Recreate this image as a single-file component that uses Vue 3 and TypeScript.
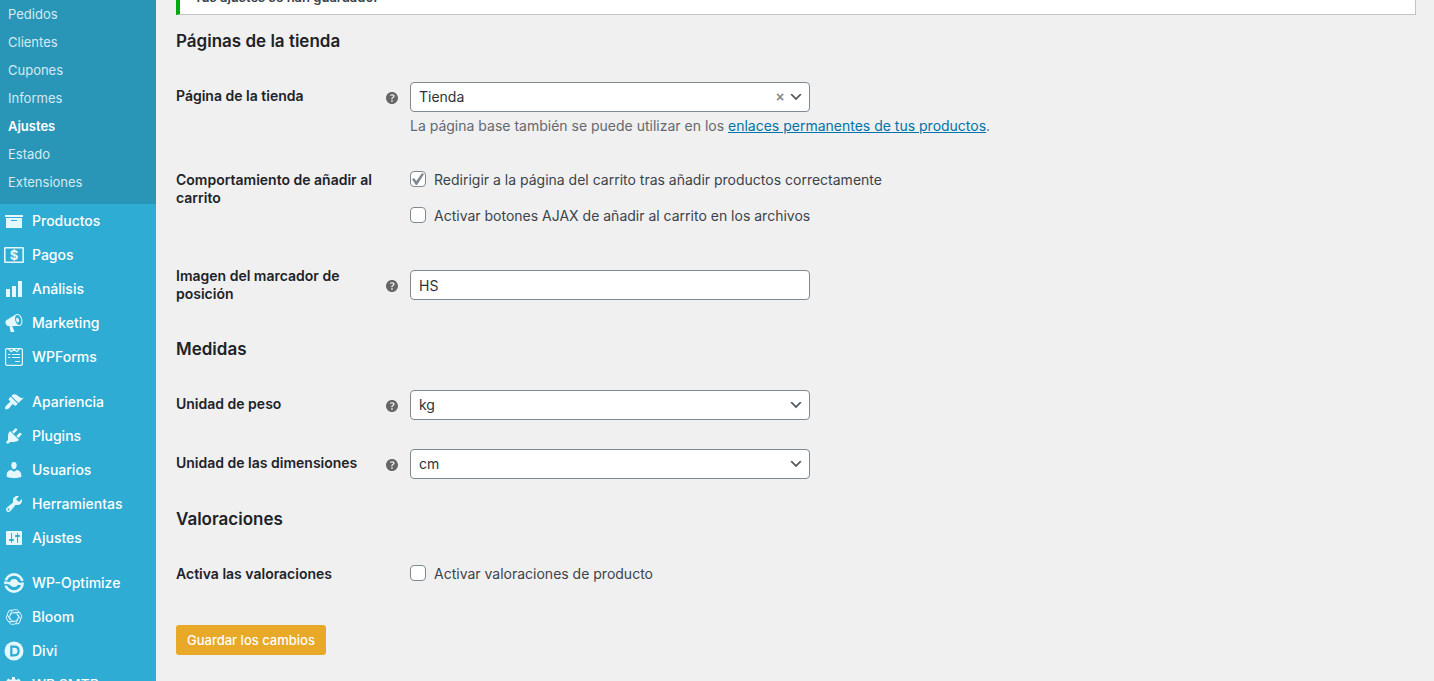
<script setup lang="ts">
import { ref } from 'vue'

interface MenuItem {
  label: string
  icon: string
  path?: string
  gap?: boolean
}

const submenu: string[] = ['Pedidos', 'Clientes', 'Cupones', 'Informes', 'Ajustes', 'Estado', 'Extensiones']

const menu: MenuItem[] = [
  { label: 'Productos', icon: 'path', path: 'M19 4v2H1V4h18zM2 7h16v10H2V7zm11 3V9H7v1h6z' },
  { label: 'Pagos', icon: 'money' },
  { label: 'Análisis', icon: 'path', path: 'M18 18V2h-4v16h4zm-6 0V7H8v11h4zm-6 0v-8H2v8h4z' },
  {
    label: 'Marketing',
    icon: 'path',
    path: 'M18.15 5.94c.46 1.62.38 3.22-.02 4.48-.42 1.28-1.26 2.18-2.3 2.48-.16.06-.26.06-.4.06-.06.02-.12.02-.18.02-.06.02-.14.02-.22.02h-6.8l2.22 5.5c.02.14-.06.26-.14.34-.08.1-.24.16-.34.16H6.95c-.1 0-.26-.06-.34-.16-.08-.08-.16-.2-.14-.34l-1-5.5H4.25l-.02-.02c-.5.06-1.08-.18-1.54-.62s-.88-1.08-1.06-1.88c-.24-.8-.2-1.56-.02-2.2.18-.62.58-1.08 1.06-1.3l.02-.02 9-5.4c.1-.06.18-.1.24-.16.06-.04.14-.08.24-.12.16-.08.28-.12.5-.18 1.04-.3 2.24.1 3.22.98s1.84 2.24 2.26 3.86zm-2.58 5.98h-.02c.4-.1.74-.34 1.04-.7.58-.7.86-1.76.86-3.04 0-.64-.1-1.3-.28-1.98-.34-1.36-1.02-2.5-1.78-3.24s-1.68-1.1-2.46-.88c-.82.22-1.4.96-1.7 2-.32 1.04-.28 2.36.06 3.72.38 1.36 1 2.5 1.8 3.24.78.74 1.62 1.1 2.48.88zm-2.54-7.08c.22-.04.42-.02.62.04.38.16.76.48 1.02 1s.42 1.2.42 1.78c0 .3-.04.56-.12.8-.18.48-.44.84-.86.94-.34.1-.8-.06-1.14-.4s-.64-.86-.78-1.5c-.18-.62-.12-1.24.02-1.72s.48-.84.82-.94z',
  },
  { label: 'WPForms', icon: 'forms' },
  {
    label: 'Apariencia',
    icon: 'path',
    gap: true,
    path: 'M14.48 11.06L7.41 3.99l1.5-1.5c.5-.56 2.3-.47 3.51.32 1.21.8 1.43 1.28 2.91 2.1 1.18.64 2.45 1.26 4.45.85zm-.71.71L6.7 4.7 4.93 6.47c-.39.39-.39 1.02 0 1.41l1.06 1.06c.39.39.39 1.03 0 1.42-.6.6-1.43 1.11-2.21 1.69-.35.26-.7.53-1.01.84C1.43 14.23.4 16.08 1.4 17.07c.99 1 2.84-.03 4.18-1.36.31-.31.58-.66.85-1.02.57-.78 1.08-1.61 1.69-2.21.39-.39 1.02-.39 1.41 0l1.06 1.06c.39.39 1.02.39 1.41 0z',
  },
  {
    label: 'Plugins',
    icon: 'path',
    path: 'M13.11 4.36L9.87 7.6 8 5.73l3.24-3.24c.35-.34 1.05-.2 1.56.32.52.51.66 1.21.31 1.55zm-8 1.77l.91-1.12 9.01 9.01-1.19.84c-.71.71-2.63 1.16-3.82 1.16H6.14L4.9 17.26c-.59.59-1.54.59-2.12 0-.59-.58-.59-1.53 0-2.12l1.24-1.24v-3.88c0-1.13.4-3.19 1.09-3.89zm7.26 3.97l3.24-3.24c.34-.35 1.04-.21 1.55.31.52.51.66 1.21.31 1.55l-3.24 3.25z',
  },
  {
    label: 'Usuarios',
    icon: 'path',
    path: 'M10 9.25c-2.27 0-2.73-3.44-2.73-3.44C7 4.02 7.82 2 9.97 2c2.16 0 2.98 2.02 2.71 3.81 0 0-.41 3.44-2.68 3.44zm0 2.57L12.72 10c2.39 0 4.52 2.33 4.52 4.53v2.49s-3.65 1.13-7.24 1.13c-3.65 0-7.24-1.13-7.24-1.13v-2.49c0-2.25 1.94-4.48 4.47-4.48z',
  },
  {
    label: 'Herramientas',
    icon: 'path',
    path: 'M16.68 9.77c-1.34 1.34-3.3 1.67-4.95.99l-5.41 6.52c-.99.99-2.59.99-3.58 0s-.99-2.59 0-3.57l6.52-5.42c-.68-1.65-.35-3.61.99-4.95 1.28-1.28 3.12-1.62 4.72-1.06l-2.89 2.89 2.82 2.82 2.86-2.87c.53 1.58.18 3.39-1.08 4.65zM3.81 16.21c.4.39 1.04.39 1.43 0 .4-.4.4-1.04 0-1.43-.39-.4-1.03-.4-1.43 0-.39.39-.39 1.03 0 1.43z',
  },
  {
    label: 'Ajustes',
    icon: 'path',
    path: 'M18 16V4c0-.55-.45-1-1-1H3c-.55 0-1 .45-1 1v12c0 .55.45 1 1 1h14c.55 0 1-.45 1-1zM8 11h1c.55 0 1 .45 1 1s-.45 1-1 1H8v1.5c0 .28-.22.5-.5.5s-.5-.22-.5-.5V13H6c-.55 0-1-.45-1-1s.45-1 1-1h1V5.5c0-.28.22-.5.5-.5s.5.22.5.5V11zm5-2h-1c-.55 0-1-.45-1-1s.45-1 1-1h1V5.5c0-.28.22-.5.5-.5s.5.22.5.5V7h1c.55 0 1 .45 1 1s-.45 1-1 1h-1v5.5c0 .28-.22.5-.5.5s-.5-.22-.5-.5V9z',
  },
  { label: 'WP-Optimize', icon: 'optimize', gap: true },
  { label: 'Bloom', icon: 'bloom' },
  { label: 'Divi', icon: 'divi' },
  {
    label: 'WP SMTP',
    icon: 'path',
    path: 'M18 12h-2.18c-.17.7-.44 1.35-.81 1.93l1.54 1.54-2.1 2.1-1.54-1.54c-.58.36-1.23.63-1.91.79V19H8v-2.18c-.68-.16-1.33-.43-1.91-.79l-1.54 1.54-2.12-2.12 1.54-1.54c-.36-.58-.63-1.23-.79-1.91H1V9.03h2.17c.16-.7.44-1.35.8-1.94L2.43 5.55l2.1-2.1 1.54 1.54c.58-.37 1.24-.64 1.93-.81V2h3v2.18c.68.16 1.33.43 1.91.79l1.54-1.54 2.12 2.12-1.54 1.54c.36.59.64 1.24.8 1.94H18V12zm-8.5 1.5c1.66 0 3-1.34 3-3s-1.34-3-3-3-3 1.34-3 3 1.34 3 3 3z',
  },
]

const helpPath =
  'M17 10c0-3.87-3.14-7-7-7-3.87 0-7 3.13-7 7s3.13 7 7 7c3.86 0 7-3.13 7-7zm-6.3 1.48H9.14v-.43c0-.38.08-.7.24-.98s.46-.57.88-.89c.41-.29.68-.53.81-.71.14-.18.2-.39.2-.62 0-.25-.09-.44-.28-.58-.19-.13-.45-.19-.79-.19-.58 0-1.25.15-2 .46l-.64-1.28c.87-.49 1.8-.74 2.77-.74.81 0 1.45.2 1.92.58.48.39.71.91.71 1.55 0 .43-.09.8-.29 1.11-.19.32-.57.67-1.11 1.06-.38.28-.61.49-.71.63-.1.15-.15.34-.15.57v.46zm-1.47 2.74c-.18-.17-.27-.42-.27-.73 0-.33.08-.58.26-.75s.43-.25.77-.25c.32 0 .57.09.75.26s.27.42.27.74c0 .3-.09.55-.27.72-.18.18-.43.27-.75.27-.33 0-.58-.09-.76-.26z'

const shopPage = ref('Tienda')
const redirect = ref(true)
const ajax = ref(false)
const placeholderImage = ref('HS')
const weight = ref('kg')
const dimension = ref('cm')
const reviews = ref(false)
</script>

<template>
  <div class="shell">
    <nav class="sidebar">
      <ul class="submenu">
        <li v-for="item in submenu" :key="item">
          <a href="#" :class="{ current: item === 'Ajustes' }">{{ item }}</a>
        </li>
      </ul>
      <ul class="menu">
        <li v-for="item in menu" :key="item.label" :class="{ gap: item.gap }">
          <a href="#">
            <svg class="icon" viewBox="0 0 20 20" aria-hidden="true">
              <path v-if="item.icon === 'path'" :d="item.path" />
              <template v-else-if="item.icon === 'money'">
                <rect class="line" x="0.8" y="2.8" width="18.4" height="14.4" rx="0.5" />
                <text class="glyph" x="10" y="14.5" font-size="13">$</text>
              </template>
              <template v-else-if="item.icon === 'forms'">
                <g class="line thin">
                  <rect x="1.6" y="1.6" width="16.8" height="16.8" rx="1.4" />
                  <path d="M4.5 2l2.7 2.6L10 2.2l2.8 2.4L15.5 2" />
                  <path d="M4 7.5h2.500M8 7.5h8M4 10.5h2.500M8 10.5h8M11 14.5h5" />
                </g>
              </template>
              <template v-else-if="item.icon === 'optimize'">
                <circle class="line ring" cx="10" cy="10" r="8.6" />
                <path class="cut slit" d="M-1 7.400Q3 8 5.500 10.200M14.500 8.200Q17 9 21 8.700M-1 11.600L3.400 12" />
                <path d="M0 8.200Q4 8.600 7 9.200V12.200Q3 11.500 0 8.200zM20 12.300Q16 12 13 11.800V8.400Q17 9.400 20 12.300z" />
                <circle cx="10" cy="10" r="4" />
              </template>
              <g v-else-if="item.icon === 'bloom'" class="line petal">
                <path
                  v-for="n in 6"
                  :key="n"
                  :transform="`rotate(${n * 60} 10 10)`"
                  d="M5.8 8.2L8.1 3.9Q8.800 2.7 10.100 2.7H12.600Q13.600 2.7 14.100 3.6L15.200 5.600M8 5.9H12.300"
                />
              </g>
              <template v-else>
                <circle cx="10" cy="10" r="9.5" />
                <path class="cut" d="M7.3 5.7h2.9c2.7 0 4.400 1.7 4.400 4.3s-1.700 4.3-4.400 4.3H7.3z" />
              </template>
            </svg>
            <span>{{ item.label }}</span>
          </a>
        </li>
      </ul>
    </nav>

    <main class="content">
      <div class="notice"><strong>Tus ajustes se han guardado.</strong></div>

      <form @submit.prevent>
        <h2>Páginas de la tienda</h2>

        <div class="row">
          <label class="name" for="shop-page">Página de la tienda</label>
          <svg class="help" viewBox="3 3 14 14" aria-hidden="true"><path :d="helpPath" /></svg>
          <div class="field">
            <div class="select">
              <select id="shop-page" v-model="shopPage">
                <option>Tienda</option>
              </select>
              <button class="clear" type="button" aria-label="Borrar" @click="shopPage = ''">×</button>
              <svg class="chevron" viewBox="0 0 20 20" aria-hidden="true"><path d="M5 6l5 5 5-5 2 1-7 7-7-7z" /></svg>
            </div>
            <p class="description">
              La página base también se puede utilizar en los
              <a href="#">enlaces permanentes de tus productos</a>.
            </p>
          </div>
        </div>

        <div class="row" role="group" aria-labelledby="cart-behaviour">
          <span id="cart-behaviour" class="name">Comportamiento de añadir al carrito</span>
          <div class="field checks">
            <label><input v-model="redirect" type="checkbox" />Redirigir a la página del carrito tras añadir productos correctamente</label>
            <label><input v-model="ajax" type="checkbox" />Activar botones AJAX de añadir al carrito en los archivos</label>
          </div>
        </div>

        <div class="row middle">
          <label class="name" for="placeholder-image">Imagen del marcador de posición</label>
          <svg class="help" viewBox="3 3 14 14" aria-hidden="true"><path :d="helpPath" /></svg>
          <div class="field">
            <input id="placeholder-image" v-model="placeholderImage" class="text" type="text" />
          </div>
        </div>

        <h2>Medidas</h2>

        <div class="row">
          <label class="name" for="weight">Unidad de peso</label>
          <svg class="help" viewBox="3 3 14 14" aria-hidden="true"><path :d="helpPath" /></svg>
          <div class="field">
            <div class="select">
              <select id="weight" v-model="weight">
                <option>kg</option>
                <option>g</option>
              </select>
              <svg class="chevron" viewBox="0 0 20 20" aria-hidden="true"><path d="M5 6l5 5 5-5 2 1-7 7-7-7z" /></svg>
            </div>
          </div>
        </div>

        <div class="row">
          <label class="name" for="dimension">Unidad de las dimensiones</label>
          <svg class="help" viewBox="3 3 14 14" aria-hidden="true"><path :d="helpPath" /></svg>
          <div class="field">
            <div class="select">
              <select id="dimension" v-model="dimension">
                <option>cm</option>
                <option>m</option>
              </select>
              <svg class="chevron" viewBox="0 0 20 20" aria-hidden="true"><path d="M5 6l5 5 5-5 2 1-7 7-7-7z" /></svg>
            </div>
          </div>
        </div>

        <h2>Valoraciones</h2>

        <div class="row" role="group" aria-labelledby="reviews">
          <span id="reviews" class="name">Activa las valoraciones</span>
          <div class="field checks">
            <label><input v-model="reviews" type="checkbox" />Activar valoraciones de producto</label>
          </div>
        </div>

        <button class="save" type="submit">Guardar los cambios</button>
      </form>
    </main>
  </div>
</template>

<style>
body {
  margin: 0;
  background: #f0f0f1;
}
</style>

<style scoped>
.shell {
  display: flex;
  height: 100vh;
  overflow: hidden;
  background: #f0f0f1;
  color: #3c434a;
  font: 14px/18px Inter, Roboto, 'Liberation Sans', sans-serif;
}

.sidebar {
  flex: 0 0 156px;
  background: #2eacd4;
}

ul {
  margin: 0;
  padding: 0;
  list-style: none;
}

.submenu {
  padding-bottom: 8px;
  background: #2996b8;
}

.submenu a {
  display: block;
  padding: 5px 8px;
  color: #d5eaf1;
  font-size: 13px;
  text-decoration: none;
}

.submenu a.current {
  color: #fff;
  font-weight: 600;
}

.menu a {
  display: flex;
  align-items: center;
  gap: 8px;
  height: 34px;
  padding-left: 4px;
  color: #fff;
  font-weight: 500;
  text-decoration: none;
}

.menu .gap {
  margin-top: 11px;
}

.icon {
  width: 20px;
  height: 20px;
  fill: #e5f8ff;
}

.line {
  fill: none;
  stroke: #e5f8ff;
  stroke-width: 1.6;
}

.thin {
  stroke-width: 1.2;
}

.ring {
  stroke-width: 2.6;
}

.petal {
  stroke-width: 0.9;
}

.glyph {
  font-weight: 700;
  text-anchor: middle;
}

.cut {
  fill: none;
  stroke: #2eacd4;
  stroke-width: 2.2;
}

.slit {
  stroke-width: 1.4;
}

.content {
  flex: 1;
  min-width: 0;
  padding: 0 18px 0 20px;
}

.notice {
  display: flex;
  align-items: flex-end;
  box-sizing: border-box;
  height: 15px;
  padding: 0 14px 8px;
  overflow: hidden;
  border: 1px solid #c3c4c7;
  border-top: 0;
  border-left: 4px solid #00a90f;
  background: #fff;
}

.notice strong {
  flex: none;
  font-size: 13px;
  font-weight: 600;
}

h2 {
  margin: 0;
  color: #1d2327;
  font-size: 17px;
  font-weight: 600;
  line-height: 52px;
}

.row {
  display: grid;
  grid-template-columns: 200px 12px minmax(0, 1fr);
  column-gap: 10px;
  align-items: start;
}

.name {
  grid-column: 1;
  padding: 20px 0;
  color: #1d2327;
  font-weight: 600;
}

.help {
  width: 12px;
  height: 12px;
  margin-top: 25px;
  fill: #666;
}

.field {
  grid-column: 3;
  padding: 15px 0 14px 2px;
}

.middle {
  align-items: center;
}

.middle .field {
  padding-bottom: 15px;
}

.middle .help {
  margin-top: 2px;
}

.select {
  position: relative;
  max-width: 400px;
}

select,
.text {
  display: block;
  box-sizing: border-box;
  width: 100%;
  max-width: 400px;
  height: 30px;
  margin: 0;
  padding: 0 8px;
  border: 1px solid #7e8993;
  border-radius: 4px;
  background: #fff;
  color: #2c3338;
  font: inherit;
  appearance: none;
}

.chevron {
  position: absolute;
  top: 7px;
  right: 6px;
  width: 16px;
  height: 16px;
  fill: #50575e;
  pointer-events: none;
}

.clear {
  position: absolute;
  top: 6px;
  right: 24px;
  width: 12px;
  height: 18px;
  padding: 0;
  border: 0;
  background: none;
  color: #888;
  font: 700 14px/18px 'Liberation Sans', sans-serif;
}

.description {
  margin: 4px 0 1px;
  color: #646970;
  line-height: 20px;
}

.description a {
  color: #0073aa;
}

.checks {
  display: grid;
  justify-items: start;
  gap: 18px;
  padding: 20px 0 22px 2px;
}

.checks label {
  display: flex;
  align-items: flex-start;
  gap: 8px;
}

.checks input {
  display: grid;
  place-content: center;
  box-sizing: border-box;
  flex: none;
  width: 16px;
  height: 16px;
  margin: 0;
  border: 1px solid #7e8993;
  border-radius: 4px;
  background: #fff;
  appearance: none;
}

.checks input:checked::before {
  content: '';
  width: 12px;
  height: 12px;
  background: #7e8993;
  clip-path: polygon(0 52%, 16% 42%, 36% 66%, 84% 0, 100% 10%, 42% 100%, 32% 100%);
}

.save {
  display: block;
  height: 30px;
  margin-top: 20px;
  padding: 0 11px;
  border: 0;
  border-radius: 3px;
  background: #e8a828;
  color: #fff;
  font: 500 13px/30px Inter, Roboto, 'Liberation Sans', sans-serif;
}
</style>
